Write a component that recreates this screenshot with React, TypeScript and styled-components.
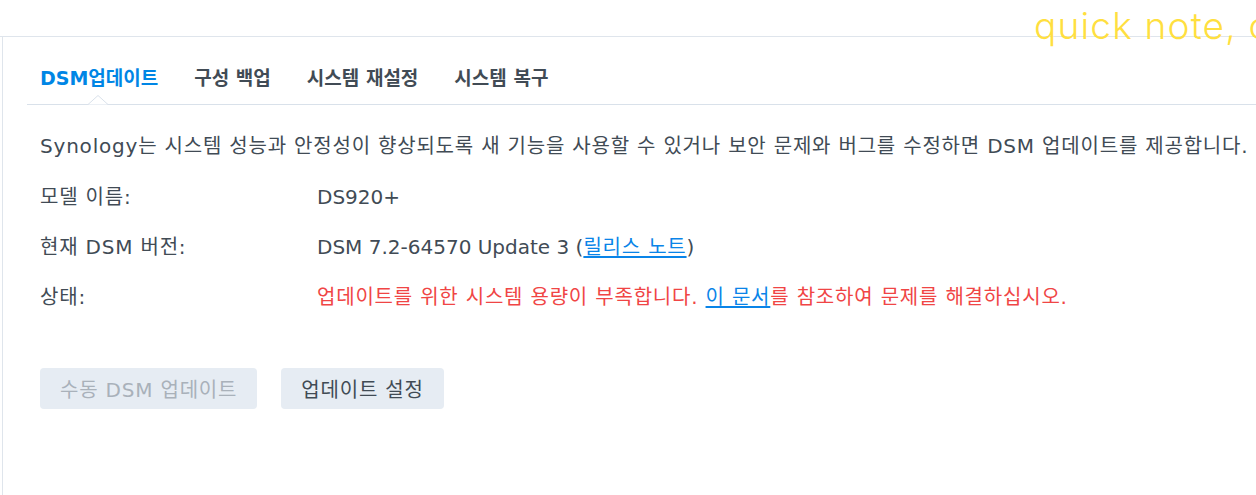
import styled, { createGlobalStyle } from "styled-components";

const GlobalStyle = createGlobalStyle`
  html, body {
    margin: 0;
    padding: 0;
    background: #ffffff;
  }
  body {
    font-family: "DejaVu Sans", "Noto Sans CJK KR", sans-serif;
    color: #414b55;
  }
`;

const Page = styled.div`
  position: relative;
  width: 1256px;
  height: 495px;
  overflow: hidden;
  background: #ffffff;
`;

const TopStrip = styled.div`
  height: 36px;
  border-bottom: 1px solid #dfe5ec;
`;

const Panel = styled.div`
  margin-left: 2px;
  height: 458px;
  border-left: 1px solid #dfe5ec;
`;

const TabBar = styled.div`
  position: relative;
  display: flex;
  align-items: center;
  gap: 36px;
  margin-left: 24px;
  height: 67px;
  padding-left: 13px;
  border-bottom: 1px solid #d9e1ea;
`;

const Tab = styled.div<{ $active?: boolean }>`
  font-size: 19px;
  font-weight: 700;
  color: ${(p) => (p.$active ? "#0086e5" : "#414b55")};
  white-space: nowrap;
  padding-top: 11px;
`;

const Caret = styled.svg`
  position: absolute;
  left: 61px;
  bottom: -1px;
`;

const Content = styled.div`
  padding: 28px 0 0 37px;
  font-size: 20px;
  letter-spacing: 0.8px;
`;

const Description = styled.p`
  margin: 0;
  height: 51px;
  line-height: 26px;
  white-space: nowrap;
`;

const InfoRow = styled.div`
  display: grid;
  grid-template-columns: 277px 1fr;
  height: 50px;
  line-height: 26px;
  white-space: nowrap;
`;

const Value = styled.span<{ $error?: boolean; $latin?: boolean }>`
  color: ${(p) => (p.$error ? "#f04545" : "#414b55")};
  letter-spacing: ${(p) => (p.$latin ? "0" : "0.8px")};
`;

const Link = styled.a`
  color: #0a84e8;
  letter-spacing: 0.8px;
  text-decoration: underline;
  text-underline-offset: 2px;
  cursor: pointer;
`;

const ButtonRow = styled.div`
  display: flex;
  gap: 24px;
  margin-top: 34px;
`;

const Button = styled.button<{ $disabled?: boolean }>`
  height: 41px;
  padding: 0 20px;
  border: none;
  border-radius: 4px;
  background: #e6ecf3;
  font-family: inherit;
  font-size: 20px;
  letter-spacing: 0.8px;
  color: ${(p) => (p.$disabled ? "#a9b1ba" : "#414b55")};
  cursor: ${(p) => (p.$disabled ? "default" : "pointer")};
`;

const QuickNote = styled.div`
  position: absolute;
  left: 1034px;
  top: 3px;
  font-family: Inter, sans-serif;
  font-weight: 300;
  font-size: 37px;
  letter-spacing: 1.2px;
  color: #ffdf3f;
  white-space: nowrap;
`;

export default function App() {
  return (
    <Page>
      <GlobalStyle />
      <TopStrip />
      <Panel>
        <TabBar>
          <Tab $active>DSM업데이트</Tab>
          <Tab>구성 백업</Tab>
          <Tab>시스템 재설정</Tab>
          <Tab>시스템 복구</Tab>
          <Caret width="20" height="10" viewBox="0 0 20 10">
            <polyline points="0,9.5 10,0.5 20,9.5" fill="#ffffff" stroke="#d9e1ea" strokeWidth="1" />
          </Caret>
        </TabBar>
        <Content>
          <Description>
            Synology는 시스템 성능과 안정성이 향상되도록 새 기능을 사용할 수 있거나 보안 문제와 버그를 수정하면 DSM 업데이트를 제공합니다.
          </Description>
          <InfoRow>
            <span>모델 이름:</span>
            <Value $latin>DS920+</Value>
          </InfoRow>
          <InfoRow>
            <span>현재 DSM 버전:</span>
            <Value $latin>
              DSM 7.2-64570 Update 3 (<Link>릴리스 노트</Link>)
            </Value>
          </InfoRow>
          <InfoRow>
            <span>상태:</span>
            <Value $error>
              업데이트를 위한 시스템 용량이 부족합니다. <Link>이 문서</Link>를 참조하여 문제를 해결하십시오.
            </Value>
          </InfoRow>
          <ButtonRow>
            <Button $disabled>수동 DSM 업데이트</Button>
            <Button>업데이트 설정</Button>
          </ButtonRow>
        </Content>
      </Panel>
      <QuickNote>quick note, c</QuickNote>
    </Page>
  );
}
